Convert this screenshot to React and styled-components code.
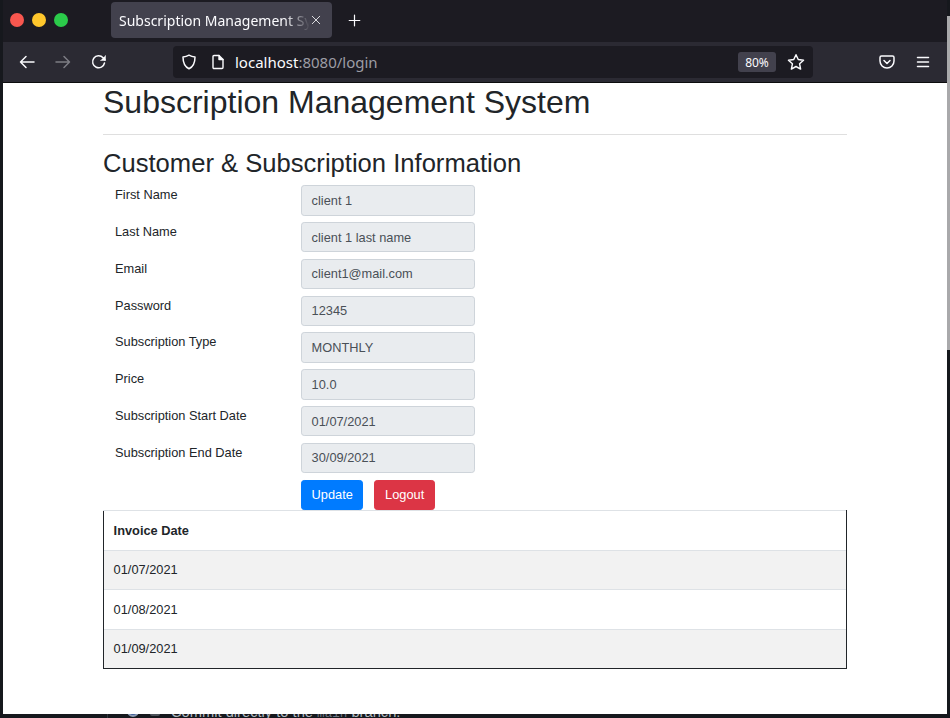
import React from "react";
import styled, { createGlobalStyle } from "styled-components";

const GlobalStyle = createGlobalStyle`
  html, body {
    margin: 0;
    padding: 0;
    background: #16181d;
  }
  * {
    box-sizing: border-box;
  }
`;

const Screen = styled.div`
  position: relative;
  width: 950px;
  height: 718px;
  overflow: hidden;
  display: flex;
  flex-direction: column;
  background: #16181d;
  font-family: "Liberation Sans", Arial, sans-serif;
`;

const BackScrollThumb = styled.div`
  position: absolute;
  top: 16px;
  right: 0;
  width: 3px;
  height: 334px;
  background: #a9a9ab;
`;

const TabBar = styled.div`
  height: 42px;
  flex: none;
  margin: 0 3px;
  display: flex;
  align-items: flex-start;
  background: #1c1b22;
  padding: 0 0 0 7px;
`;

const Lights = styled.div`
  display: flex;
  gap: 8px;
  padding-top: 13px;
  width: 101px;
`;

const Light = styled.span`
  width: 14px;
  height: 14px;
  border-radius: 50%;
  background: ${(p) => p.$color};
`;

const Tab = styled.div`
  width: 221px;
  height: 36px;
  margin-top: 2px;
  border-radius: 4px;
  background: #42414d;
  color: #fbfbfe;
  display: flex;
  align-items: center;
  padding-left: 8px;
  font-family: "Noto Sans", sans-serif;
  font-size: 14px;
`;

const TabTitle = styled.span`
  width: 191px;
  white-space: nowrap;
  overflow: hidden;
  -webkit-mask-image: linear-gradient(to right, #000 165px, transparent 191px);
  mask-image: linear-gradient(to right, #000 165px, transparent 191px);
`;

const NewTab = styled.div`
  margin: 14px 0 0 16px;
  display: flex;
`;

const ToolBar = styled.div`
  height: 41px;
  flex: none;
  margin: 0 3px;
  display: flex;
  align-items: center;
  background: #2b2a33;
  border-bottom: 1px solid #0c0c0d;
  padding: 0 0 0 16px;
`;

const NavIcons = styled.div`
  display: flex;
  align-items: center;
  gap: 20px;
  width: 154px;
`;

const UrlBar = styled.div`
  width: 640px;
  height: 32px;
  border-radius: 4px;
  background: #1c1b22;
  display: flex;
  align-items: center;
  padding: 0 8px;
`;

const UrlIcons = styled.div`
  display: flex;
  align-items: center;
  gap: 13px;
  width: 54px;
`;

const UrlText = styled.div`
  flex: 1;
  font-family: "Noto Sans", sans-serif;
  font-size: 15px;
  color: #9d9da5;
`;

const UrlHost = styled.span`
  color: #fbfbfe;
`;

const ZoomBadge = styled.span`
  width: 38px;
  height: 20px;
  margin-right: 11px;
  border-radius: 3px;
  background: #42414d;
  color: #fbfbfe;
  font-family: "Noto Sans", sans-serif;
  font-size: 12px;
  display: flex;
  align-items: center;
  justify-content: center;
`;

const RightIcons = styled.div`
  margin-left: 66px;
  display: flex;
  align-items: center;
  gap: 20px;
`;

const Viewport = styled.div`
  height: 631px;
  flex: none;
  margin: 0 3px;
  background: #fff;
  color: #212529;
`;

const Container = styled.div`
  width: 744px;
  margin-left: 100px;
`;

const Title = styled.h2`
  margin: 0;
  font-size: 32px;
  font-weight: 500;
  line-height: 38.4px;
`;

const Rule = styled.hr`
  margin: 12.8px 0 12.8px;
  border: 0;
  border-top: 1px solid #dfdfdf;
`;

const SubTitle = styled.h3`
  margin: 0 0 6.5px;
  font-size: 25.6px;
  font-weight: 500;
  line-height: 30.7px;
`;

const FormRow = styled.div`
  display: flex;
  margin-bottom: 6.4px;
  font-size: 12.8px;
`;

const Label = styled.label`
  width: 198px;
  padding: 0 12px;
  line-height: 19.2px;
`;

const Field = styled.div`
  width: 174px;
  height: 30.4px;
  padding: 0 9.6px;
  display: flex;
  align-items: center;
  background: #e9ecef;
  border: 1px solid #ced4da;
  border-radius: 3.2px;
  color: #495057;
`;

const ButtonRow = styled.div`
  display: flex;
  gap: 11px;
  padding-top: 0.4px;
  margin-left: 198px;
`;

const Button = styled.button`
  height: 30px;
  padding: 0 9.6px;
  border: 1px solid ${(p) => p.$color};
  border-radius: 3.2px;
  background: ${(p) => p.$color};
  color: #fff;
  font-family: inherit;
  font-size: 12.8px;
`;

const Table = styled.table`
  width: 744px;
  border-collapse: collapse;
  font-size: 12.8px;
`;

const Cell = styled.td`
  height: ${(p) => (p.$short ? 39 : 40)}px;
  padding: 0 9.6px;
  border-top: 1px solid #dee2e6;
  border-left: 1px solid #212529;
  border-right: 1px solid #212529;
  font-weight: ${(p) => (p.$head ? 700 : 400)};
`;

const Row = styled.tr`
  background: ${(p) => (p.$odd ? "#f2f2f2" : "#fff")};
  &:last-child td {
    border-bottom: 1px solid #212529;
  }
`;

const BehindStrip = styled.div`
  flex: 1;
  overflow: hidden;
  display: flex;
  align-items: flex-start;
  padding-left: 107px;
  color: #aeb6bd;
  font-size: 14.7px;
`;

const BehindLine = styled.span`
  width: 1px;
  height: 4px;
  margin-right: 19px;
  background: #30363d;
`;

const BehindRadio = styled.span`
  width: 12px;
  height: 12px;
  margin: -9px 11px 0 0;
  border-radius: 50%;
  border: 2px solid #8b9bb4;
  background: #3f5f9a;
`;

const BehindDot = styled.span`
  width: 10px;
  height: 2px;
  margin: 0 11px 0 0;
  border-radius: 0 0 5px 5px;
  background: #4c5259;
`;

const BehindText = styled.span`
  margin-top: -10px;
  white-space: pre;
`;

const Code = styled.code`
  font-family: "Liberation Mono", monospace;
  font-size: 12.6px;
  color: #6e7681;
`;

const Icon = ({ size = 16, color = "#fbfbfe", width = 1.5, children }) => (
  <svg width={size} height={size} viewBox="0 0 16 16" fill="none" stroke={color} strokeWidth={width} strokeLinecap="round" strokeLinejoin="round">
    {children}
  </svg>
);

const fields = [
  ["First Name", "client 1"],
  ["Last Name", "client 1 last name"],
  ["Email", "client1@mail.com"],
  ["Password", "12345"],
  ["Subscription Type", "MONTHLY"],
  ["Price", "10.0"],
  ["Subscription Start Date", "01/07/2021"],
  ["Subscription End Date", "30/09/2021"],
];

const invoices = ["01/07/2021", "01/08/2021", "01/09/2021"];

export default function App() {
  return (
    <>
      <GlobalStyle />
      <Screen>
        <BackScrollThumb />
        <TabBar>
          <Lights>
            <Light $color="#f8574f" />
            <Light $color="#ffc72c" />
            <Light $color="#2bcb4a" />
          </Lights>
          <Tab>
            <TabTitle>Subscription Management System</TabTitle>
            <Icon size={12} width={1.1}>
              <path d="M3 3l10 10M13 3L3 13" />
            </Icon>
          </Tab>
          <NewTab>
            <Icon size={13}>
              <path d="M8 1.5v13M1.5 8h13" />
            </Icon>
          </NewTab>
        </TabBar>
        <ToolBar>
          <NavIcons>
            <Icon>
              <path d="M15 8H1.5M7 2.5L1.5 8 7 13.5" />
            </Icon>
            <Icon color="#7d7d84">
              <path d="M1 8h13.5M9 2.5L14.5 8 9 13.5" />
            </Icon>
            <Icon>
              <path d="M13.5 9a6 6 0 1 1-1.4-5.2L14 6" />
              <path d="M14.5 1.5V6.5H9.5" fill="#fbfbfe" strokeWidth="0.5" />
            </Icon>
          </NavIcons>
          <UrlBar>
            <UrlIcons>
              <Icon>
                <path d="M8 1.2c2 1.2 4 1.7 6 1.8 0 5.5-1.6 9.7-6 11.800C3.600 12.700 2 8.500 2 3c2-.1 4-.6 6-1.800z" />
              </Icon>
              <Icon width={1.4}>
                <path d="M3 2.500A1 1 0 0 1 4 1.500h5l4 4v8a1 1 0 0 1-1 1H4a1 1 0 0 1-1-1z" />
                <path d="M9 1.500v4h4" fill="#fbfbfe" />
              </Icon>
            </UrlIcons>
            <UrlText>
              <UrlHost>localhost</UrlHost>:8080/login
            </UrlText>
            <ZoomBadge>80%</ZoomBadge>
            <Icon size={18} width={1.3}>
              <path d="M8 1.500l2 4.300 4.700.6-3.500 3.200.9 4.700L8 12l-4.100 2.300.9-4.700L1.300 6.400 6 5.800z" />
            </Icon>
          </UrlBar>
          <RightIcons>
            <Icon>
              <path d="M2.500 2h11A1.500 1.500 0 0 1 15 3.500V7A7 7 0 0 1 1 7V3.500A1.500 1.500 0 0 1 2.500 2z" />
              <path d="M5 6.500l3 3 3-3" />
            </Icon>
            <Icon>
              <path d="M2.500 3.500h11M2.500 8h11M2.500 12.500h11" />
            </Icon>
          </RightIcons>
        </ToolBar>
        <Viewport>
          <Container>
            <Title>Subscription Management System</Title>
            <Rule />
            <SubTitle>Customer &amp; Subscription Information</SubTitle>
            {fields.map(([label, value]) => (
              <FormRow key={label}>
                <Label>{label}</Label>
                <Field>{value}</Field>
              </FormRow>
            ))}
            <ButtonRow>
              <Button $color="#007bff">Update</Button>
              <Button $color="#dc3545">Logout</Button>
            </ButtonRow>
            <Table>
              <tbody>
                <Row>
                  <Cell $head>Invoice Date</Cell>
                </Row>
                {invoices.map((date, i) => (
                  <Row key={date} $odd={i % 2 === 0}>
                    <Cell $short={i % 2 === 0}>{date}</Cell>
                  </Row>
                ))}
              </tbody>
            </Table>
          </Container>
        </Viewport>
        <BehindStrip>
          <BehindLine />
          <BehindRadio />
          <BehindDot />
          <BehindText>
            Commit directly to the <Code>main</Code> branch.
          </BehindText>
        </BehindStrip>
      </Screen>
    </>
  );
}
